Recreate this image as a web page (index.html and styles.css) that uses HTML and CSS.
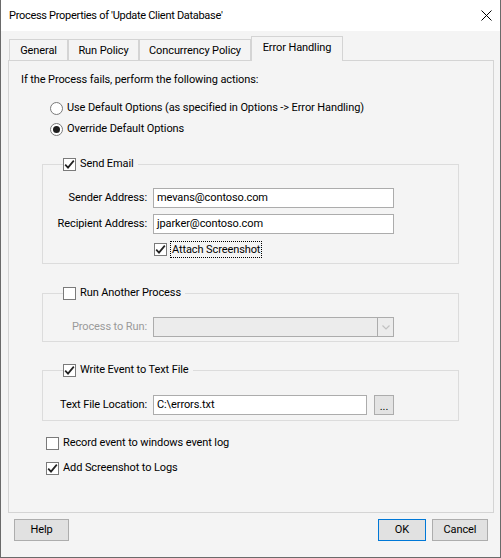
FILE: index.html
```html
<!DOCTYPE html>
<html>
<head>
<meta charset="utf-8">
<title>Process Properties</title>
<link rel="stylesheet" href="styles.css">
</head>
<body>
<div class="window">
  <div class="titlebar">
    <span class="title">Process Properties of 'Update Client Database'</span>
    <svg class="close" width="11" height="11" viewBox="0 0 11 11"><path d="M0.5 0.5 L10.5 10.5 M10.5 0.5 L0.5 10.5" stroke="#000" stroke-width="1" fill="none"/></svg>
  </div>
  <div class="tabs">
    <div class="tab t-general">General</div>
    <div class="tab t-run">Run Policy</div>
    <div class="tab t-conc">Concurrency Policy</div>
    <div class="tab t-err selected">Error Handling</div>
  </div>
  <div class="panel">
    <div class="heading">If the Process fails, perform the following actions:</div>
    <label class="radio-row r1"><span class="radio"></span>Use Default Options (as specified in Options -&gt; Error Handling)</label>
    <label class="radio-row r2"><span class="radio on"></span>Override Default Options</label>

    <fieldset class="group g-email">
      <legend><span class="chk"><span class="box"><svg width="11" height="11" viewBox="0 0 11 11"><path d="M1.2 5.6 L4 8.6 L9.8 1.6" stroke="#222" stroke-width="1.7" fill="none"/></svg></span>Send Email</span></legend>
      <div class="form f-email">
        <span class="lbl">Sender Address:</span><span class="input">mevans@contoso.com</span>
        <span class="lbl">Recipient Address:</span><span class="input">jparker@contoso.com</span>
        <span></span><span class="chk attach"><span class="box"><svg width="11" height="11" viewBox="0 0 11 11"><path d="M1.2 5.6 L4 8.6 L9.8 1.6" stroke="#222" stroke-width="1.7" fill="none"/></svg></span><span class="focus">Attach Screenshot</span></span>
      </div>
    </fieldset>

    <fieldset class="group g-run">
      <legend><span class="chk"><span class="box"></span>Run Another Process</span></legend>
      <div class="form f-run">
        <span class="lbl disabled">Process to Run:</span>
        <span class="combo"><span class="combo-val"></span><span class="combo-btn"><svg width="8" height="5" viewBox="0 0 8 5"><path d="M0.5 0.5 L4 4 L7.5 0.5" stroke="#c2c2c2" stroke-width="1.2" fill="none"/></svg></span></span>
      </div>
    </fieldset>

    <fieldset class="group g-file">
      <legend><span class="chk"><span class="box"><svg width="11" height="11" viewBox="0 0 11 11"><path d="M1.2 5.6 L4 8.6 L9.8 1.6" stroke="#222" stroke-width="1.7" fill="none"/></svg></span>Write Event to Text File</span></legend>
      <div class="form f-file">
        <span class="lbl">Text File Location:</span>
        <span class="file-row"><span class="input file">C:\errors.txt</span><span class="browse">...</span></span>
      </div>
    </fieldset>

    <div class="chk opt o1"><span class="box"></span>Record event to windows event log</div>
    <div class="chk opt o2"><span class="box"><svg width="11" height="11" viewBox="0 0 11 11"><path d="M1.2 5.6 L4 8.6 L9.8 1.6" stroke="#222" stroke-width="1.7" fill="none"/></svg></span>Add Screenshot to Logs</div>
  </div>
  <div class="buttons">
    <span class="btn help">Help</span>
    <span class="spacer"></span>
    <span class="btn ok">OK</span>
    <span class="btn cancel">Cancel</span>
  </div>
</div>
</body>
</html>
```
FILE: styles.css
```css
* { box-sizing: border-box; }
html, body { margin: 0; padding: 0; background: #f4f4f4; }
body {
  font-family: Roboto, "Liberation Sans", sans-serif;
  font-size: 11px;
  letter-spacing: -0.1px;
  line-height: 16px;
  color: #000;
}
.window {
  width: 501px;
  height: 558px;
  background: #f4f4f4;
  border: 1px solid #6a6a6a;
  border-top: 0;
  display: flex;
  flex-direction: column;
}
.titlebar {
  height: 31px;
  background: #fff;
  display: flex;
  align-items: center;
  padding-left: 8px;
  padding-right: 8px;
}
.title { font-size: 11px; letter-spacing: -0.3px; flex: 1; padding-top: 1px; }
.close { display: block; }

.tabs {
  display: flex;
  align-items: flex-end;
  margin-top: 5px;
  margin-left: 8px;
  height: 25px;
  margin-bottom: -1px;
}
.tab {
  height: 22px;
  border: 1px solid #d4d4d4;
  border-bottom: 0;
  display: flex;
  align-items: center;
  justify-content: center;
  background: #f4f4f4;
  padding-top: 1px;
}
.t-general { width: 59px; }
.t-run { width: 71px; }
.t-conc { width: 112px; }
.t-err { width: 92px; }
.tab.selected {
  height: 25px;
  padding-top: 0;
  padding-bottom: 2px;
  position: relative;
  z-index: 1;
}

.panel {
  margin-left: 7px;
  width: 486px;
  height: 453px;
  border: 1px solid #d4d4d4;
  padding: 11px 0 0 12px;
  display: flex;
  flex-direction: column;
  align-items: flex-start;
}
.heading { height: 16px; }
.radio-row {
  display: flex;
  align-items: center;
  gap: 4px;
  height: 16px;
  margin-left: 29px;
}
.r1 { margin-top: 12px; }
.r2 { margin-top: 5px; }
.radio {
  width: 13px;
  height: 13px;
  border: 1px solid #7a7a7a;
  border-radius: 50%;
  background: #fff;
  display: flex;
  align-items: center;
  justify-content: center;
}
.radio.on::after {
  content: "";
  width: 7px;
  height: 7px;
  border-radius: 50%;
  background: #1e1e1e;
}

.chk {
  display: flex;
  align-items: center;
  gap: 4px;
  height: 16px;
}
.box {
  width: 13px;
  height: 13px;
  border: 1px solid #7a7a7a;
  background: #fff;
  display: flex;
  align-items: center;
  justify-content: center;
  flex: none;
}
.box svg { display: block; }

.group {
  margin: 0 0 0 21px;
  padding: 0;
  width: 417px;
  border: 1px solid #dcdcdc;
  min-width: 0;
}
.group legend {
  margin-left: 20px;
  padding: 0 4px 0 0;
}
.g-email { margin-top: 19px; padding-bottom: 5px; }
.g-run { margin-top: 21px; padding-bottom: 4px; }
.g-file { margin-top: 20px; padding-bottom: 5px; }

.form {
  display: grid;
  grid-template-columns: 104px 241px;
  column-gap: 6px;
  align-items: center;
}
.f-email { margin-top: 16px; row-gap: 6px; }
.f-email .attach { margin-top: 1px; margin-left: 1px; gap: 3px; height: 17px; }
.f-run { margin-top: 16px; }
.f-file { margin-top: 17px; }
.lbl { text-align: right; }
.lbl.disabled { color: #9a9a9a; }

.input {
  height: 20px;
  border: 1px solid #acacac;
  background: #fff;
  padding-left: 3px;
  line-height: 18px;
  white-space: nowrap;
  overflow: hidden;
}
.focus {
  border: 1px dotted #000;
  padding: 0 1px;
  line-height: 15px;
}

.combo {
  height: 20px;
  border: 1px solid #acacac;
  background: #ececec;
  display: flex;
}
.combo-val { flex: 1; }
.combo-btn {
  width: 16px;
  border-left: 1px solid #acacac;
  display: flex;
  align-items: center;
  justify-content: center;
}
.combo-btn svg { display: block; }

.file-row {
  display: flex;
  gap: 7px;
}
.input.file { width: 214px; }
.browse {
  width: 20px;
  height: 20px;
  border: 1px solid #acacac;
  background: #e3e3e3;
  display: flex;
  align-items: flex-end;
  justify-content: center;
  line-height: 14px;
  letter-spacing: 0;
}

.opt { margin-left: 25px; }
.o1 { margin-top: 14px; }
.o2 { margin-top: 9px; }

.buttons {
  display: flex;
  margin-top: 6px;
  padding: 0 12px 0 13px;
  gap: 6px;
}
.spacer { flex: 1; }
.btn {
  height: 22px;
  border: 1px solid #adadad;
  background: #e1e1e1;
  display: flex;
  align-items: center;
  justify-content: center;
}
.help { width: 55px; }
.ok { width: 48px; border-color: #0078d7; }
.cancel { width: 56px; }
```
